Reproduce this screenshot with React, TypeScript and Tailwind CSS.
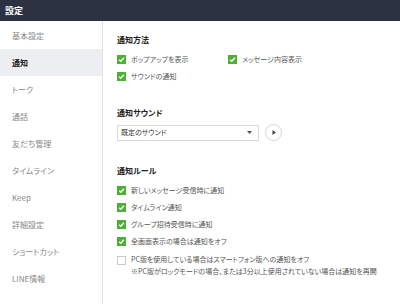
import React from "react";

const Box = ({ checked = true }: { checked?: boolean }) =>
  checked ? (
    <span className="w-[9px] h-[9px] bg-[#4cb034] flex items-center justify-center shrink-0">
      <svg width="7" height="7" viewBox="0 0 7 7">
        <path d="M1.2 3.7 L2.8 5.2 L5.9 1.8" stroke="white" strokeWidth="1.4" fill="none" />
      </svg>
    </span>
  ) : (
    <span className="block w-[9px] h-[9px] border border-[#c9c9c9] bg-white shrink-0" />
  );

const Row = ({ label, checked = true }: { label: string; checked?: boolean }) => (
  <div className="h-[17px] flex items-center">
    <Box checked={checked} />
    <span className="ml-[5px] text-[7px] text-[#555] whitespace-nowrap">{label}</span>
  </div>
);

const Heading = ({ children }: { children: React.ReactNode }) => (
  <div className="h-[16px] flex items-center text-[8px] font-bold text-[#222]">{children}</div>
);

const items = ["基本設定", "通知", "トーク", "通話", "友だち管理", "タイムライン", "Keep", "詳細設定", "ショートカット", "LINE情報"];

export default function App() {
  return (
    <div className="w-[400px] h-[304px] flex flex-col overflow-hidden bg-white font-['Noto_Sans_CJK_JP',sans-serif] [font-feature-settings:'palt']">
      <div className="h-[21px] shrink-0 bg-[#2c3242] text-white text-[9px] font-bold pl-[5px] flex items-center">設定</div>
      <div className="flex flex-1">
        <div className="w-[103px] shrink-0 border-r border-[#e3e3e3] pt-[1px]">
          {items.map((t) => (
            <div
              key={t}
              className={
                t === "通知"
                  ? "h-[27px] flex items-center pl-[12px] text-[8px] bg-[#eceef2] text-[#222] font-bold"
                  : "h-[27px] flex items-center pl-[12px] text-[8px] text-[#888]"
              }
            >
              {t}
            </div>
          ))}
        </div>
        <div className="flex-1 pl-[14px] pt-[11px]">
          <Heading>通知方法</Heading>
          <div className="mt-[3px] grid grid-cols-[111px_auto]">
            <Row label="ポップアップを表示" />
            <Row label="メッセージ内容表示" />
            <Row label="サウンドの通知" />
          </div>
          <div className="mt-[20px]">
            <Heading>通知サウンド</Heading>
          </div>
          <div className="mt-[3px] flex items-center">
            <div className="w-[142px] h-[16px] border border-[#d9d9d9] flex items-center justify-between pl-[3px] pr-[6px]">
              <span className="text-[7px] text-[#333]">既定のサウンド</span>
              <svg width="5" height="3" viewBox="0 0 5 3">
                <path d="M0 0 L5 0 L2.5 3 Z" fill="#555" />
              </svg>
            </div>
            <div className="ml-[6px] w-[17px] h-[17px] rounded-full border border-[#d5d5d5] flex items-center justify-center">
              <svg width="4" height="5" viewBox="0 0 4 5">
                <path d="M0.5 0 L4 2.5 L0.5 5 Z" fill="#444" />
              </svg>
            </div>
          </div>
          <div className="mt-[22px]">
            <Heading>通知ルール</Heading>
          </div>
          <div className="mt-[3px]">
            <Row label="新しいメッセージ受信時に通知" />
            <Row label="タイムライン通知" />
            <Row label="グループ招待受信時に通知" />
            <Row label="全画面表示の場合は通知をオフ" />
            <div className="flex items-start pt-[4px]">
              <span className="block mt-[2px]">
                <Box checked={false} />
              </span>
              <div className="ml-[5px] text-[7px] text-[#555] leading-[11.5px] whitespace-nowrap">
                <div>PC版を使用している場合はスマートフォン版への通知をオフ</div>
                <div>※PC版がロックモードの場合、または3分以上使用されていない場合は通知を再開</div>
              </div>
            </div>
          </div>
        </div>
      </div>
    </div>
  );
}
